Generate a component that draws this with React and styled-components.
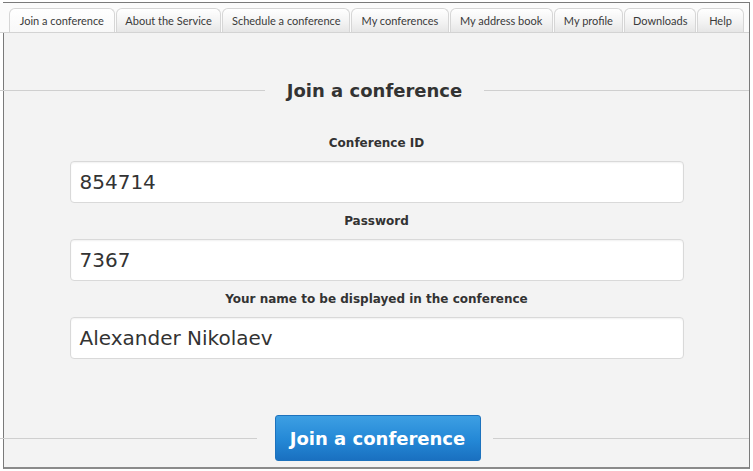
import React from "react";
import styled, { createGlobalStyle } from "styled-components";

const Global = createGlobalStyle`
  html, body { margin: 0; padding: 0; background: #fff; }
  body { width: 753px; height: 471px; overflow: hidden; }
`;

const Frame = styled.div`
  box-sizing: border-box;
  margin: 2px 0 0 3px;
  width: 747px;
  height: 467px;
  border: 1px solid #7a7a7a;
  border-bottom: 2px solid #8a8a8a;
  display: flex;
  flex-direction: column;
  background: #f3f3f3;
`;

const TabBar = styled.div`
  display: flex;
  align-items: flex-end;
  height: 29px;
  padding: 0 4px 0 9px;
  background: #fbfbfb;
  border-bottom: 1px solid #d3d3d3;
  margin-left: -4px;
`;

const Tab = styled.div`
  box-sizing: border-box;
  width: ${(p) => p.w}px;
  height: 24px;
  margin-right: 1px;
  border: 1px solid #d6d6d6;
  border-bottom: none;
  border-radius: 6px 6px 0 0;
  background: ${(p) =>
    p.active
      ? "linear-gradient(#ffffff, #f8f8f8)"
      : "linear-gradient(#ffffff 0%, #f3f3f3 55%, #e6e6e6 100%)"};
  font-family: "Lato", "Liberation Sans", sans-serif;
  font-size: 11px;
  color: #3a3a3a;
  display: flex;
  align-items: center;
  justify-content: center;
  white-space: nowrap;
`;

const Content = styled.div`
  flex: 1;
  display: flex;
  flex-direction: column;
  align-items: center;
`;

const Legend = styled.div`
  align-self: stretch;
  display: flex;
  align-items: center;
  gap: 22px;
  margin: 46px 0 0 -4px;
  height: 22px;
  font-family: "DejaVu Sans", Verdana, sans-serif;
  font-weight: bold;
  font-size: 18px;
  color: #333;
  &::before, &::after {
    content: "";
    flex: 1;
    height: 1px;
    background: #cfcfcf;
  }
`;

const Label = styled.div`
  margin-top: ${(p) => p.mt}px;
  font-family: "DejaVu Sans", Verdana, sans-serif;
  font-weight: bold;
  font-size: 12px;
  color: #333;
  line-height: 16px;
`;

const Input = styled.div`
  box-sizing: border-box;
  margin-top: 10px;
  width: 614px;
  height: 42px;
  background: #fff;
  border: 1px solid #d9d9d9;
  border-radius: 4px;
  box-shadow: inset 0 1px 2px rgba(0, 0, 0, 0.06);
  padding: 0 9px;
  display: flex;
  align-items: center;
  font-family: "DejaVu Sans", Verdana, sans-serif;
  font-size: 20px;
  color: #333;
`;

const ButtonRow = styled.div`
  align-self: stretch;
  display: flex;
  align-items: center;
  gap: 12px;
  margin: 56px 0 0 -4px;
  &::before, &::after {
    content: "";
    flex: 1;
    height: 1px;
    background: #cfcfcf;
  }
`;

const Button = styled.div`
  box-sizing: border-box;
  margin-left: 6px;
  width: 206px;
  height: 46px;
  border-radius: 3px;
  border: 1px solid #1d72bd;
  background: linear-gradient(#3d9fe3, #2488d6 55%, #1a70c0);
  color: #fff;
  font-family: "DejaVu Sans", Verdana, sans-serif;
  font-weight: bold;
  font-size: 18px;
  display: flex;
  align-items: center;
  justify-content: center;
`;

const tabs = [
  ["Join a conference", 106],
  ["About the Service", 106],
  ["Schedule a conference", 128],
  ["My conferences", 98],
  ["My address book", 103],
  ["My profile", 70],
  ["Downloads", 72],
  ["Help", 47],
];

const fields = [
  ["Conference ID", "854714", 34],
  ["Password", "7367", 10],
  ["Your name to be displayed in the conference", "Alexander Nikolaev", 10],
];

export default function App() {
  return (
    <>
      <Global />
      <Frame>
        <TabBar>
          {tabs.map(([t, w], i) => (
            <Tab key={t} w={w} active={i === 0}>
              {t}
            </Tab>
          ))}
        </TabBar>
        <Content>
          <Legend>Join a conference</Legend>
          {fields.map(([l, v, mt]) => (
            <React.Fragment key={l}>
              <Label mt={mt}>{l}</Label>
              <Input>{v}</Input>
            </React.Fragment>
          ))}
          <ButtonRow>
            <Button>Join a conference</Button>
          </ButtonRow>
        </Content>
      </Frame>
    </>
  );
}
